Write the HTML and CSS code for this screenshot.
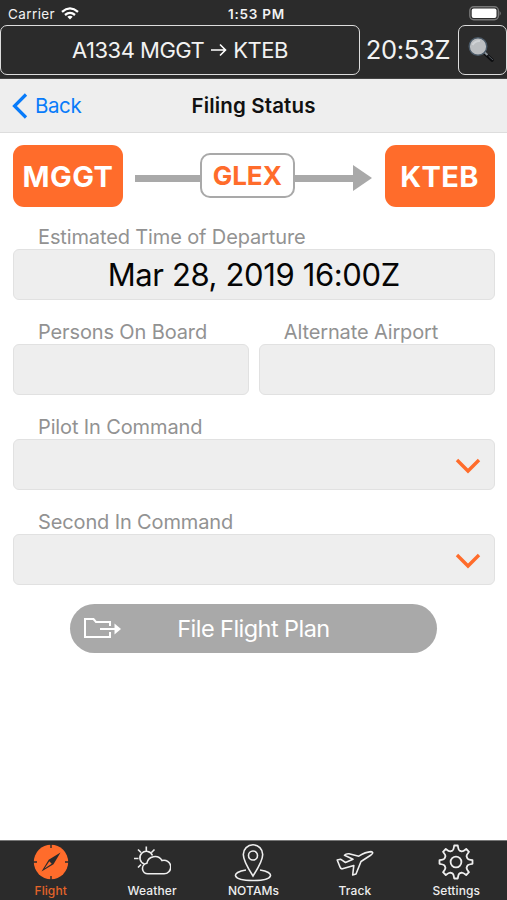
FILE: index.html
```html
<!DOCTYPE html>
<html lang="en">
<head>
<meta charset="utf-8">
<title>Filing Status</title>
<link rel="stylesheet" href="styles.css">
</head>
<body>
<div class="app">
  <header class="top">
    <div class="status">
      <div class="carrier"><span class="carrier-name">Carrier</span>
        <svg width="18" height="13" viewBox="0 0 18 13" fill="none" stroke="#fff" stroke-width="2.3"><path d="M1 4.8Q9 -2 17 4.8M4 8Q9 3.8 14 8"/><path d="M6.3 9.8Q9 7.8 11.7 9.8L9 12.5Z" fill="#fff" stroke="none"/></svg>
      </div>
      <span class="clock">1:53 PM</span>
      <svg class="battery" width="33" height="15" viewBox="0 0 33 15"><rect x=".8" y=".8" width="28.6" height="13" rx="4" fill="none" stroke="#777" stroke-width="1.4"/><rect x="2.7" y="2.6" width="24.8" height="9.4" rx="2" fill="#fff"/><path d="M30.7 5q2 2.4 0 4.8z" fill="#888"/></svg>
    </div>
    <div class="flightbar">
      <div class="flight"><span>A1334 MGGT</span><svg width="17" height="14" viewBox="0 0 17 14" fill="none" stroke="#fff" stroke-width="1.6"><path d="M1 7H15.5M10 1.5L15.5 7L10 12.5"/></svg><span>KTEB</span></div>
      <span class="zulu">20:53Z</span>
      <div class="search">
        <svg width="27" height="27" viewBox="0 0 27 27"><path d="M17.5 17L24 23" stroke="#0c0d0f" stroke-width="3.6" stroke-linecap="round"/><path d="M16.6 15.2L19.5 18" stroke="#8b9299" stroke-width="2"/><path d="M20.5 19L25 23" stroke="#555c63" stroke-width="1"/><circle cx="10" cy="9.5" r="8.8" fill="#bbbec1" stroke="#4a5967" stroke-width="1.4"/><path d="M4.5 8Q7 3.5 12 4" stroke="#d0d3d6" stroke-width="2" fill="none"/></svg>
      </div>
    </div>
  </header>
  <nav class="nav">
    <div class="back"><svg width="16" height="26" viewBox="0 0 16 26" fill="none" stroke="#087bfa" stroke-width="3.2"><path d="M14 1.5L2.5 13L14 24.5"/></svg><span>Back</span></div>
    <h1>Filing Status</h1>
  </nav>
  <main>
    <div class="route">
      <div class="airport"><span>MGGT</span></div>
      <div class="leg"><i class="line"></i><div class="aircraft"><span>GLEX</span></div><i class="line line-end"></i><i class="head"></i></div>
      <div class="airport"><span>KTEB</span></div>
    </div>
    <div class="field"><label><span>Estimated Time of Departure</span></label><div class="box"><span>Mar 28, 2019 16:00Z</span></div></div>
    <div class="pair">
      <div class="field"><label><span>Persons On Board</span></label><div class="box"></div></div>
      <div class="field"><label><span>Alternate Airport</span></label><div class="box"></div></div>
    </div>
    <div class="field"><label><span>Pilot In Command</span></label><div class="box select"><svg width="26" height="16" viewBox="0 0 26 16" fill="none" stroke="#ff6c2b" stroke-width="3.4"><path d="M2 2L13 13L24 2"/></svg></div></div>
    <div class="field"><label><span>Second In Command</span></label><div class="box select"><svg width="26" height="16" viewBox="0 0 26 16" fill="none" stroke="#ff6c2b" stroke-width="3.4"><path d="M2 2L13 13L24 2"/></svg></div></div>
    <div class="file">
      <svg width="38" height="22" viewBox="0 0 38 22" fill="none" stroke="#fff" stroke-width="2"><path d="M26 8V4H12L9.5 1H1V19H26V14"/><path d="M16 11H32"/><path d="M30.5 5.5L37 11L30.5 16.5Z" fill="#fff" stroke="none"/></svg>
      <span>File Flight Plan</span>
    </div>
  </main>
  <footer class="tabs">
    <div class="tab active"><svg width="36" height="36" viewBox="0 0 36 36"><circle cx="18" cy="18" r="17.2" fill="#ff6c2b"/><path d="M18 0V4M18 32V36M0 18H4M32 18H36" stroke="#2b2b2b" stroke-width="1.4"/><path d="M27.5 8.5L20.5 20.3L8.5 27.5L15.7 15.7Z" fill="#2b2b2b"/><path d="M16.3 17.3L18.7 19.7L11.5 24.5Z" fill="#ff6c2b"/></svg><span>Flight</span></div>
    <div class="tab"><svg width="38" height="36" viewBox="0 0 38 36" fill="none" stroke="#eee" stroke-width="1.6"><path d="M11.4 20A6.5 6.5 0 1 1 19.5 11.6M13.3 2.5V7M5 5.5L8 8.5M1 14.5H5.5M5 23.5L8 20.5M21.5 5.5L18.5 8.5"/><path d="M15 29.8A5.3 5.3 0 0 1 13.8 19.3A8.3 8.3 0 0 1 29 16.5A6.8 6.8 0 1 1 30.5 29.8Z"/></svg><span>Weather</span></div>
    <div class="tab"><svg width="38" height="38" viewBox="0 0 38 38" fill="none" stroke="#eee" stroke-width="1.6"><path d="M19 32Q9.3 17 9.3 10.5A9.7 9.7 0 0 1 28.7 10.5Q28.7 17 19 32Z"/><circle cx="19" cy="11.5" r="4.5"/><path d="M12 26C-3 28-3 36.5 19 36.5S41 28 26 26"/></svg><span>NOTAMs</span></div>
    <div class="tab"><svg width="38" height="36" viewBox="0 0 38 36" fill="none" stroke="#eee" stroke-width="1.6" stroke-linejoin="round"><path d="M1.2 16L4.5 15.2L9.5 18.5L17 15.2L8.5 11.3Q10 9.5 13 9.8L22.8 12.2C27 9.5 31 7.8 35 7.6Q38.5 8.2 35 11L25 17.5L20 30L16.7 31L17.8 21.5L6.5 24.8Q4.5 25.2 3.8 22.5Z"/></svg><span>Track</span></div>
    <div class="tab"><svg width="36" height="36" viewBox="0 0 36 36" fill="none" stroke="#eee" stroke-width="1.8" stroke-linejoin="round"><path d="M16.2 1.5H19.8Q20.4 6 21.6 6.6L23.6 7.4Q25 7.6 28.2 5L31 7.8Q28.4 11 28.6 12.4L29.4 14.4Q30 15.6 34.5 16.2V19.8Q30 20.4 29.4 21.6L28.6 23.6Q28.4 25 31 28.2L28.2 31Q25 28.4 23.6 28.6L21.6 29.4Q20.4 30 19.8 34.5H16.2Q15.6 30 14.4 29.4L12.4 28.6Q11 28.4 7.8 31L5 28.2Q7.6 25 7.4 23.6L6.6 21.6Q6 20.4 1.5 19.8V16.2Q6 15.6 6.6 14.4L7.4 12.4Q7.6 11 5 7.8L7.8 5Q11 7.6 12.4 7.4L14.4 6.6Q15.6 6 16.2 1.5Z"/><circle cx="18" cy="18" r="5.4"/></svg><span>Settings</span></div>
  </footer>
</div>
</body>
</html>
```

FILE: styles.css
```css
* { box-sizing: border-box; }
body { margin: 0; font-family: Inter, "Liberation Sans", sans-serif; background: #fff; }
.app { width: 507px; height: 900px; display: flex; flex-direction: column; overflow: hidden; white-space: nowrap; }
svg { display: block; flex: none; }
.top { background: #2b2b2b; color: #f2f2f2; height: 79px; border-bottom: 1px solid #444; }
.status { height: 25px; display: grid; grid-template-columns: 1fr auto 1fr; align-items: center; padding: 2px 5px 0 8px; font-size: 13.5px; }
.carrier { display: flex; align-items: center; gap: 6px; }
.carrier-name { letter-spacing: .4px; }
.clock { font-weight: 600; letter-spacing: .75px; padding-left: 3px; }
.battery { justify-self: end; }
.flightbar { display: flex; height: 50px; align-items: center; }
.flight { width: 360px; height: 50px; border: 1.5px solid #ddd; border-radius: 7px; display: flex; align-items: center; justify-content: center; gap: 6px; font-size: 22px; letter-spacing: -.5px; }
.zulu { width: 98px; padding-right: 2px; text-align: center; font-size: 25.5px; line-height: 30px; margin-top: -1px; letter-spacing: -.3px; }
.search { width: 49px; height: 50px; border: 1.5px solid #ddd; border-radius: 7px; display: flex; align-items: center; justify-content: center; padding-right: 2px; }
.nav { height: 54px; background: #eee; border-bottom: 1px solid #ddd; display: grid; grid-template-columns: 1fr auto 1fr; align-items: center; padding: 0 12px; }
.back { display: flex; align-items: center; gap: 7px; color: #087bfa; font-size: 20.5px; letter-spacing: -.4px; }
.nav h1 { margin: 0; color: #111; font-size: 20.5px; font-weight: 600; letter-spacing: .15px; }
main { flex: 1; padding: 12px 12.5px 0 13px; }
.route { display: flex; height: 62px; margin-bottom: 19px; }
.airport { width: 110px; height: 62px; border-radius: 11px; background: #ff6c2b; color: #fff; font-weight: 700; font-size: 29px; display: flex; align-items: center; justify-content: center; letter-spacing: .4px; }
.leg { flex: 1; padding: 4px 13px 0 12px; display: flex; align-items: center; }
.line { height: 7px; background: #a9a9a9; width: 65px; }
.line-end { width: 58px; }
.head { border-left: 19px solid #a9a9a9; border-top: 13px solid transparent; border-bottom: 13px solid transparent; }
.aircraft { width: 95px; height: 45px; margin-bottom: 5px; border: 2px solid #a9a9a9; border-radius: 10px; color: #ff6c2b; font-weight: 700; font-size: 26px; display: flex; align-items: center; justify-content: center; }
.field { height: 95px; }
label { display: flex; height: 23px; line-height: 22px; padding-left: 25px; color: #929292; font-size: 20px; letter-spacing: -.13px; }
.box { height: 51px; border: 1.5px solid #e1e1e1; border-radius: 6px; background: #eee; display: flex; align-items: center; justify-content: center; color: #050505; font-size: 31px; letter-spacing: -.37px; }
.select { justify-content: flex-end; padding-right: 13px; padding-top: 3px; }
.pair { display: grid; grid-template-columns: 1fr 1fr; gap: 10px; }
.file { width: 367px; height: 49px; margin: -2px 0 0 57px; border-radius: 25px; background: #a9a9a9; color: #fff; display: grid; grid-template-columns: 37px 1fr 37px; align-items: center; padding: 0 14px; font-size: 23.5px; letter-spacing: -.55px; text-align: center; }
.tabs { height: 60px; background: #2b2b2b; border-top: 1px solid #777; display: grid; grid-template-columns: repeat(5, 1fr); color: #eee; font-size: 12px; font-weight: 500; letter-spacing: .1px; }
.tab { display: flex; flex-direction: column; align-items: center; justify-content: space-between; padding: 3px 0 2px; }
.active { color: #e46429; }
```
